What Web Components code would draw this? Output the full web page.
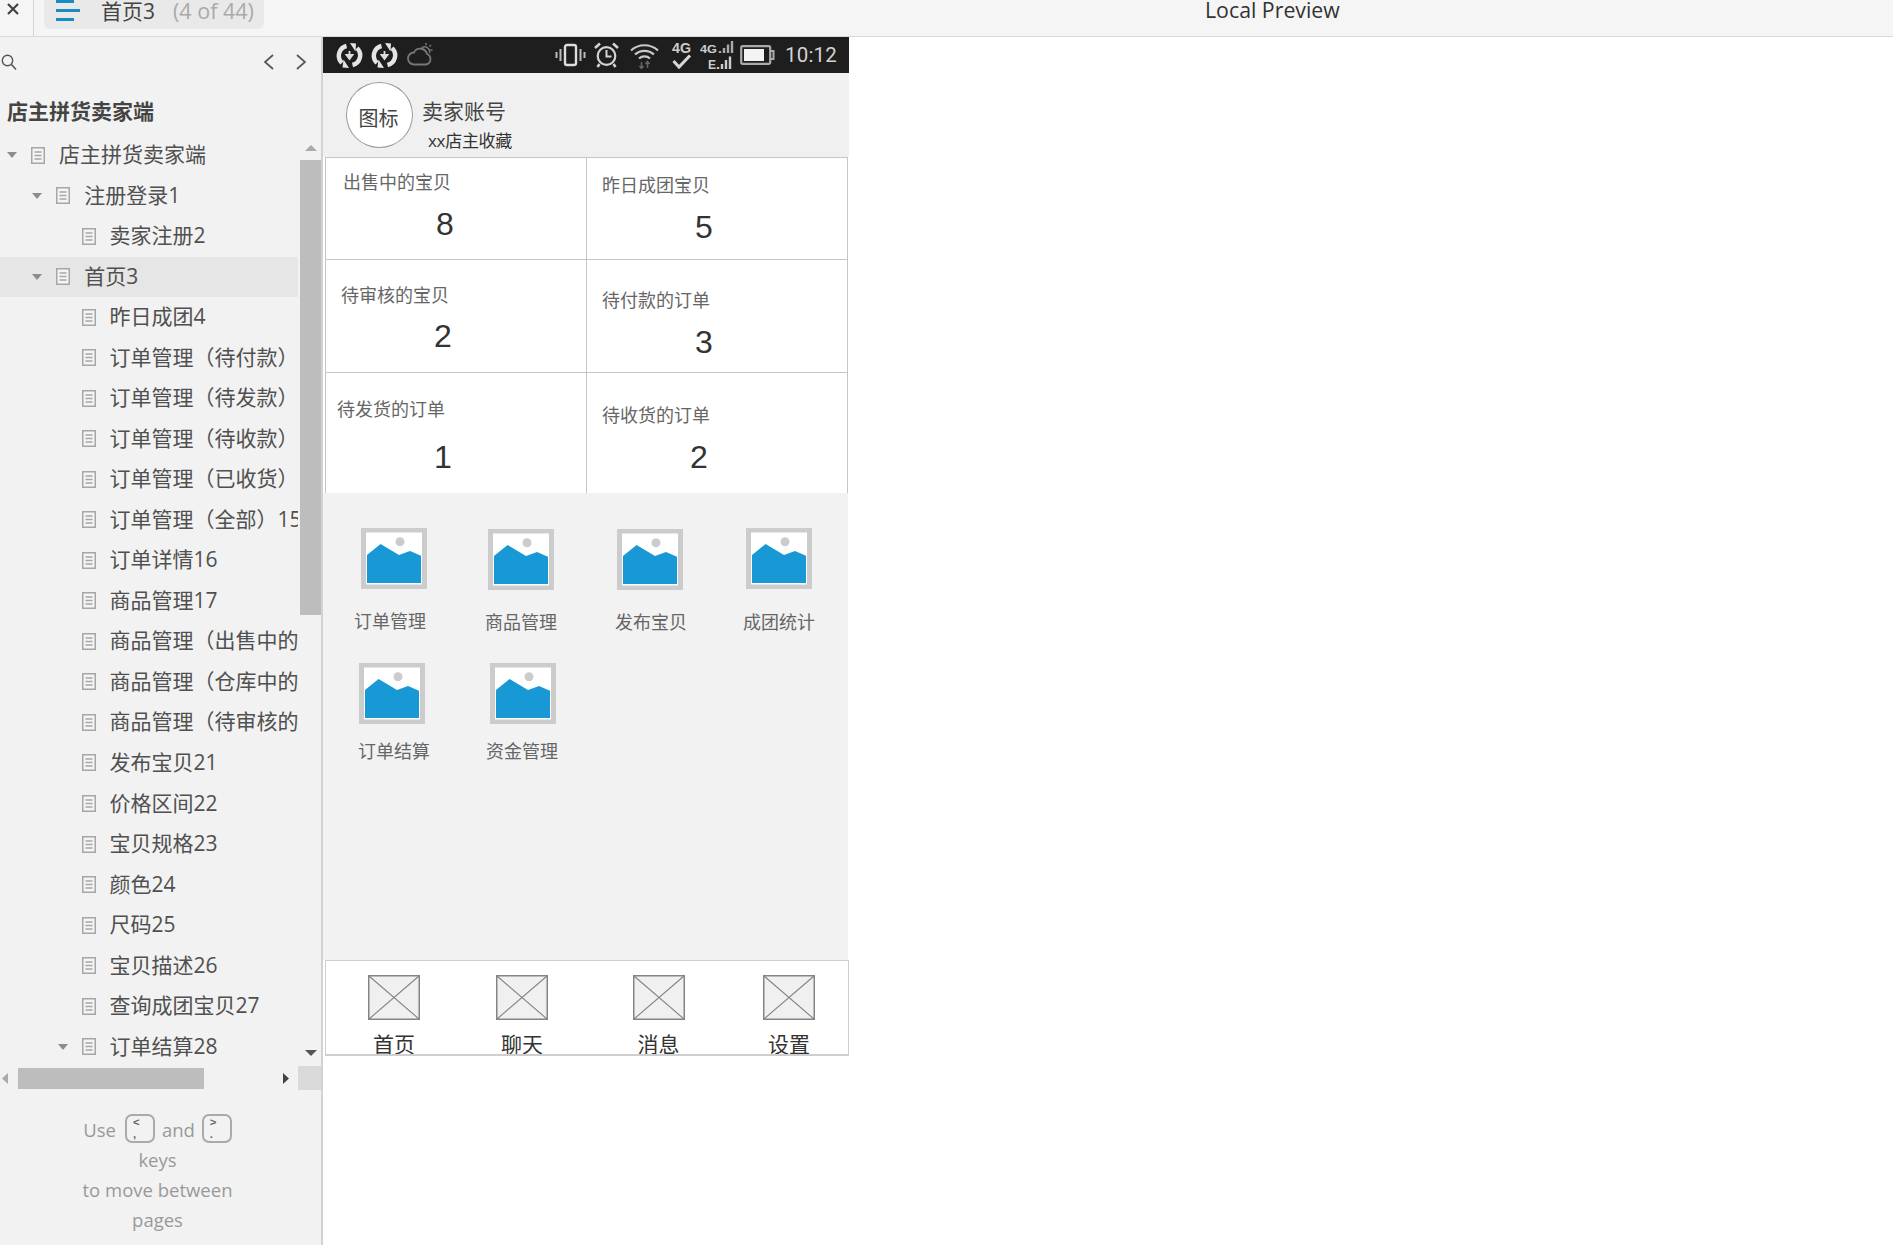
<!DOCTYPE html>
<html lang="zh-CN">
<head>
<meta charset="utf-8">
<title>Local Preview</title>
<style>
html, body { margin: 0; background: #fff; }
body { font-family: "Open Sans", "Noto Sans CJK SC", sans-serif; height: 1245px; overflow: hidden; }
</style>
</head>
<body>
<preview-app></preview-app>
<script>
const CN = `"Open Sans", "Noto Sans CJK SC", sans-serif`;

class TopBar extends HTMLElement {
	constructor () {
		super();
		this.attachShadow({ mode: 'open' });
		this.shadowRoot.innerHTML = `
		<style>
		:host { display: flex; height: 36px; background: #f5f5f5; border-bottom: 1px solid #d9d9d9; font-family: ${CN}; overflow: hidden; }
		.close { width: 33px; border-right: 1px solid #d5d5d5; flex: none; box-sizing: content-box; }
		.close svg { display: block; margin: 3px 0 0 7px; }
		.tab { margin-left: 10px; width: 220px; height: 29px; background: #e9e9e9; border-radius: 0 0 6px 6px; display: flex; align-items: center; flex: none; }
		.burger { margin-left: 12px; width: 24px; height: 21px; margin-top: -8px; flex: none; }
		.name { margin-left: 21px; font-size: 21px; line-height: 24px; color: #444; margin-top: -7px; }
		.count { margin-left: 18px; font-size: 21.5px; line-height: 24px; color: #aaa; margin-top: -7px; white-space: nowrap; }
		.title { margin-left: 941px; margin-top: -2px; font-size: 21.3px; line-height: 24px; color: #333; white-space: nowrap; }
		</style>
		<div class="close"><svg width="12" height="12" viewBox="0 0 12 12"><path d="M1 1 11 11M11 1 1 11" stroke="#444" stroke-width="2.2" fill="none"/></svg></div>
		<div class="tab">
			<svg class="burger" viewBox="0 0 24 21"><path d="M0 1.5H18M0 10.5H24M0 19.5H18" stroke="#1a8cc4" stroke-width="3" fill="none"/></svg>
			<span class="name">首页3</span><span class="count">(4 of 44)</span>
		</div>
		<div class="title">Local Preview</div>`;
	}
}
customElements.define('top-bar', TopBar);

class TreeRow extends HTMLElement {
	constructor () {
		super();
		this.attachShadow({ mode: 'open' });
	}
	connectedCallback() {
		const level = Number(this.getAttribute('level') || 0);
		const arrow = this.hasAttribute('arrow') ? 'visible' : 'hidden';
		this.shadowRoot.innerHTML = `
		<style>
		:host { display: flex; align-items: center; flex: 1 1 0; min-height: 0; white-space: nowrap; overflow: hidden; padding-left: ${7 + level * 25.3}px; font-size: 21px; color: #505050; font-family: ${CN}; }
		:host([selected]) { background: #e6e6e6; }
		.ar { visibility: ${arrow}; flex: none; width: 10px; height: 6px; margin-right: 14px; }
		.doc { flex: none; width: 14px; height: 17px; margin-right: 14px; }
		.t { margin-top: -4px; }
		</style>
		<svg class="ar" viewBox="0 0 10 6"><path d="M0 0H10L5 6Z" fill="#8c8c8c"/></svg>
		<svg class="doc" viewBox="0 0 14 17"><path d="M.75.75H13.25V16.25H.75Z" fill="#f4f4f4" stroke="#a6a6a6" stroke-width="1.5"/><path d="M3.5 5H10.5M3.5 8.5H10.5M3.5 12H10.5" stroke="#a6a6a6" stroke-width="1.3"/></svg>
		<span class="t"><slot></slot></span>`;
	}
}
customElements.define('tree-row', TreeRow);

class KeyCap extends HTMLElement {
	constructor () {
		super();
		this.attachShadow({ mode: 'open' });
		this.shadowRoot.innerHTML = `
		<style>
		:host { display: block; flex: none; width: 30px; height: 29px; box-sizing: border-box; border: 2px solid #aaa; border-radius: 7px; padding: 0 0 0 6px; color: #666; font: 700 11.3px/12.5px "Liberation Sans", sans-serif; text-align: left; overflow: hidden; }
		</style><slot></slot>`;
	}
}
customElements.define('key-cap', KeyCap);

class SideTree extends HTMLElement {
	constructor () {
		super();
		this.attachShadow({ mode: 'open' });
		const rows = [
			[0, 1, '店主拼货卖家端'], [1, 1, '注册登录1'], [2, 0, '卖家注册2'], [1, 1, '首页3', 1],
			[2, 0, '昨日成团4'], [2, 0, '订单管理（待付款）'], [2, 0, '订单管理（待发款）'], [2, 0, '订单管理（待收款）'],
			[2, 0, '订单管理（已收货）'], [2, 0, '订单管理（全部）15'], [2, 0, '订单详情16'], [2, 0, '商品管理17'],
			[2, 0, '商品管理（出售中的）18'], [2, 0, '商品管理（仓库中的）19'], [2, 0, '商品管理（待审核的）20'], [2, 0, '发布宝贝21'],
			[2, 0, '价格区间22'], [2, 0, '宝贝规格23'], [2, 0, '颜色24'], [2, 0, '尺码25'],
			[2, 0, '宝贝描述26'], [2, 0, '查询成团宝贝27'], [2, 1, '订单结算28'],
		].map(r => `<tree-row level="${r[0]}" ${r[1] ? 'arrow' : ''} ${r[3] ? 'selected' : ''}>${r[2]}</tree-row>`).join('');
		this.shadowRoot.innerHTML = `
		<style>
		:host { display: flex; flex-direction: column; width: 323px; box-sizing: border-box; height: 1208px; background: #f2f2f2; border-right: 2px solid #d2d2d2; flex: none; font-family: ${CN}; }
		.search { height: 50px; flex: none; display: flex; align-items: center; padding-left: 1px; }
		.search .nav { width: 11px; height: 18px; }
		.title { height: 48px; flex: none; box-sizing: border-box; padding: 12px 0 0 7px; font-size: 21px; line-height: 24px; font-weight: 700; color: #444; }
		.body { height: 932px; flex: none; display: flex; }
		.rows { width: 298px; display: flex; flex-direction: column; overflow: hidden; flex: none; }
		.vbar { flex: 1; padding-left: 2px; display: flex; flex-direction: column; }
		.up { height: 25px; display: flex; justify-content: center; padding-top: 10px; box-sizing: border-box; flex: none; }
		.thumb { height: 455px; background: #bdbdbd; flex: none; }
		.fill { flex: 1; }
		.down { height: 23px; box-sizing: border-box; display: flex; justify-content: center; padding-top: 6px; flex: none; }
		.hbar { height: 22px; flex: none; display: flex; align-items: center; }
		.hthumb { width: 186px; height: 21px; background: #bdbdbd; margin-left: 10px; flex: none; }
		.corner { width: 23px; height: 24px; background: #dadada; margin-left: auto; flex: none; }
		.hint { text-align: center; font-size: 18.5px; line-height: 30px; color: #999; padding: 26px 6px 0 0; }
		.first { display: flex; justify-content: center; align-items: center; gap: 7px; height: 30px; }
		.first key-cap { margin-top: -4px; }
		.first span:first-child { margin-right: 2px; }
		</style>
		<div class="search">
			<svg width="16" height="17" viewBox="0 0 16 17"><circle cx="6.5" cy="6.5" r="5.2" fill="none" stroke="#555" stroke-width="1.4"/><path d="M10.5 10.5 15 15.5" stroke="#555" stroke-width="1.6"/></svg>
			<svg class="nav" style="margin-left:246px" viewBox="0 0 11 18"><path d="M10 2 2 9 10 16" fill="none" stroke="#555" stroke-width="1.7"/></svg>
			<svg class="nav" style="margin-left:22px" viewBox="0 0 11 18"><path d="M1 2 9 9 1 16" fill="none" stroke="#555" stroke-width="1.7"/></svg>
		</div>
		<div class="title">店主拼货卖家端</div>
		<div class="body">
			<div class="rows">${rows}</div>
			<div class="vbar">
				<div class="up"><svg width="12" height="6" viewBox="0 0 12 6"><path d="M0 6H12L6 0Z" fill="#aaa"/></svg></div>
				<div class="thumb"></div><div class="fill"></div>
				<div class="down"><svg width="12" height="6" viewBox="0 0 12 6"><path d="M0 0H12L6 6Z" fill="#555"/></svg></div>
			</div>
		</div>
		<div class="hbar">
			<svg width="6" height="11" viewBox="0 0 6 11" style="margin-left:2px;flex:none"><path d="M6 0V11L0 5.5Z" fill="#aaa"/></svg>
			<div class="hthumb"></div>
			<svg width="6" height="11" viewBox="0 0 6 11" style="margin-left:79px;flex:none"><path d="M0 0V11L6 5.5Z" fill="#444"/></svg>
			<div class="corner"></div>
		</div>
		<div class="hint">
			<div class="first"><span>Use</span><key-cap>&lt;<br>,</key-cap><span>and</span><key-cap>&gt;<br>.</key-cap></div>
			<div>keys</div><div>to move between</div><div>pages</div>
		</div>`;
	}
}
customElements.define('side-tree', SideTree);

class StatusBar extends HTMLElement {
	constructor () {
		super();
		this.attachShadow({ mode: 'open' });
		const sync = `<svg width="27" height="25" viewBox="0 0 27 25" style="margin-left:MLpx">
			<path d="M10.5 3A10 10 0 0 0 6 20" fill="none" stroke="#e4e4e4" stroke-width="4.4"/>
			<path d="M16.5 22A10 10 0 0 0 21 5" fill="none" stroke="#e4e4e4" stroke-width="4.4"/>
			<path d="M14 0 20 .5 19.5 8.5ZM13 25 6.5 24.5 7.5 16.5Z" fill="#e4e4e4"/>
			<path d="M13.5 8V13M10.5 12 13.5 16 16.5 12Z" fill="#ddd" stroke="#ddd" stroke-width="1.8"/></svg>`;
		this.shadowRoot.innerHTML = `
		<style>
		:host { display: flex; align-items: center; height: 36px; background: #1e1e1e; flex: none; overflow: hidden; }
		svg { flex: none; display: block; }
		.time { margin-left: 10px; font: 20.5px/24px Roboto, "Liberation Sans", sans-serif; color: #d2d2d2; letter-spacing: .2px; }
		text { font-family: "Liberation Sans", sans-serif; font-weight: 700; fill: #ccc; }
		</style>
		${sync.replace('ML', '13')}${sync.replace('ML', '8')}
		<svg width="26" height="24" viewBox="0 0 26 24" style="margin-left:9px"><path d="M7 21.5H19A5.5 5.5 0 0 0 20 11 7 7 0 0 0 7 9.5 6 6 0 0 0 7 21.5Z" fill="#1e1e1e" stroke="#777" stroke-width="1.8"/><path d="M14.5 5A5 5 0 0 1 22.5 10M19 0V2.2M25.5 7H23.5M24 2 22.5 3.5" fill="none" stroke="#777" stroke-width="1.5"/></svg>
		<svg width="31" height="24" viewBox="0 0 31 24" style="margin-left:122px"><path d="M1.5 9V15M5.5 6V18M25.5 6V18M29.5 9V15" stroke="#bbb" stroke-width="2" fill="none"/><rect x="10" y="2" width="11" height="20" rx="2" fill="none" stroke="#ddd" stroke-width="2.4"/></svg>
		<svg width="25" height="26" viewBox="0 0 25 26" style="margin-left:8px"><circle cx="12.5" cy="14" r="8.8" fill="none" stroke="#d4d4d4" stroke-width="2.2"/><path d="M12.5 8V14.5H17.5" fill="none" stroke="#d4d4d4" stroke-width="2"/><path d="M1 6 6 1.5M24 6 19 1.5M5.5 22 3.5 25M19.5 22 21.5 25" stroke="#d4d4d4" stroke-width="2.6"/></svg>
		<svg width="29" height="27" viewBox="0 0 29 27" style="margin-left:11px"><path d="M1 8.5A20 20 0 0 1 28 8.5M5 12.5A14 14 0 0 1 24 12.5M9 16.5A8 8 0 0 1 20 16.5" fill="none" stroke="#c8c8c8" stroke-width="2.2"/><path d="M11.5 20V26M9.5 24 11.5 26.5 13.5 24M17.5 26V20M15.5 22 17.5 19.5 19.5 22" fill="none" stroke="#666" stroke-width="1.5"/></svg>
		<svg width="20" height="30" viewBox="0 0 20 30" style="margin-left:13px"><text x="0" y="12.5" font-size="15" textLength="19" lengthAdjust="spacingAndGlyphs">4G</text><path d="M1.5 21 7 27 18 15.5" fill="none" stroke="#d8d8d8" stroke-width="3"/></svg>
		<svg width="34" height="31" viewBox="0 0 34 31" style="margin-left:8px"><text x="0" y="13" font-size="11" textLength="17" lengthAdjust="spacingAndGlyphs">4G</text><path d="M20 13V11M24 13V8M28 13V4.5M32 13V1" stroke="#aaa" stroke-width="2.4"/><text x="8" y="29" font-size="12">E</text><path d="M18 29V27M22 29V24M26 29V20M30 29V16.5" stroke="#ccc" stroke-width="2.4"/></svg>
		<svg width="35" height="20" viewBox="0 0 35 20" style="margin-left:6px"><rect x="1.2" y="1.2" width="29" height="17.6" rx="1.5" fill="none" stroke="#aaa" stroke-width="2.2"/><rect x="4" y="4" width="20" height="12" fill="#f4f4f4"/><path d="M31 6H33.5V14H31" fill="none" stroke="#aaa" stroke-width="2"/></svg>
		<span class="time">10:12</span>`;
	}
}
customElements.define('status-bar', StatusBar);

class ShopHeader extends HTMLElement {
	constructor () {
		super();
		this.attachShadow({ mode: 'open' });
		this.shadowRoot.innerHTML = `
		<style>
		:host { display: flex; height: 84px; background: #f0f0f0; flex: none; box-sizing: border-box; font-family: ${CN}; color: #444; }
		.avatar { margin: 9px 0 0 23px; width: 67px; height: 66px; box-sizing: border-box; border: 1px solid #999; border-radius: 50%; background: #fff; display: flex; align-items: center; justify-content: center; padding: 5px 2px 0 0; font-size: 20px; flex: none; }
		.txt { margin-left: 9px; }
		.acc { margin-top: 26px; font-size: 21px; line-height: 24px; white-space: nowrap; }
		.fav { margin: 6px 0 0 6px; font-size: 17px; line-height: 24px; white-space: nowrap; letter-spacing: -.3px; color: #333; }
		</style>
		<div class="avatar">图标</div>
		<div class="txt"><div class="acc"><slot name="acc"></slot></div><div class="fav"><slot name="fav"></slot></div></div>`;
	}
}
customElements.define('shop-header', ShopHeader);

class StatCell extends HTMLElement {
	constructor () {
		super();
		this.attachShadow({ mode: 'open' });
	}
	connectedCallback() {
		const m = this.getAttribute('m').split(' ');
		this.shadowRoot.innerHTML = `
		<style>
		:host { display: block; box-sizing: border-box; border-right: 1px solid #c6c6c6; font-family: ${CN}; overflow: hidden; }
		.l { margin: ${m[0]}px 0 0 ${m[1]}px; font-size: 18px; line-height: 24px; color: #666; white-space: nowrap; }
		.n { margin: ${m[2]}px 0 0 ${m[3]}px; font: 32px/36px "Liberation Sans", sans-serif; color: #333; }
		</style>
		<div class="l">${this.getAttribute('label')}</div>
		<div class="n">${this.getAttribute('value')}</div>`;
	}
}
customElements.define('stat-cell', StatCell);

class StatGrid extends HTMLElement {
	constructor () {
		super();
		this.attachShadow({ mode: 'open' });
		this.shadowRoot.innerHTML = `
		<style>
		:host { display: grid; grid-template-columns: 261px 261px; grid-template-rows: 102px 113px 120px; margin-left: 2px; width: 523px; height: 336px; box-sizing: border-box; border-left: 1px solid #c6c6c6; border-top: 1px solid #c6c6c6; background: #fff; flex: none; }
		::slotted(stat-cell:nth-child(-n+4)) { border-bottom: 1px solid #c6c6c6; }
		</style>
		<slot></slot>`;
	}
}
customElements.define('stat-grid', StatGrid);

class AppIcon extends HTMLElement {
	constructor () {
		super();
		this.attachShadow({ mode: 'open' });
	}
	connectedCallback() {
		const m = this.getAttribute('m').split(' ');
		this.shadowRoot.innerHTML = `
		<style>
		:host { display: block; width: 80px; flex: none; margin-left: ${m[0]}px; font-family: ${CN}; }
		svg { display: block; margin: ${m[1]}px 0 0 ${m[2]}px; }
		.l { margin-top: ${m[3] || 20}px; font-size: 18px; line-height: 24px; color: #666; white-space: nowrap; }
		</style>
		<svg width="66" height="61" viewBox="0 0 66 61">
			<rect width="66" height="61" fill="#ccc"/><rect x="5" y="4.5" width="56" height="52" fill="#fff"/>
			<path d="M6 27 19.6 16 38 27 49 23 60 27.7V55H6Z" fill="#1899d6"/>
			<circle cx="39" cy="13.7" r="4.5" fill="#ccc"/>
		</svg>
		<div class="l"><slot></slot></div>`;
	}
}
customElements.define('app-icon', AppIcon);

class TabItem extends HTMLElement {
	constructor () {
		super();
		this.attachShadow({ mode: 'open' });
	}
	connectedCallback() {
		this.shadowRoot.innerHTML = `
		<style>
		:host { display: flex; flex-direction: column; align-items: center; width: 52px; flex: none; margin-left: ${this.getAttribute('ml')}px; font-family: ${CN}; }
		svg { display: block; flex: none; }
		.l { margin-top: 11px; font-size: 21px; line-height: 26px; color: #333; white-space: nowrap; }
		</style>
		<svg width="52" height="45" viewBox="0 0 52 45"><rect x=".75" y=".75" width="50.5" height="43.5" fill="#f0f0f0" stroke="#848484" stroke-width="1.5"/><path d="M1 1 51 44M51 1 1 44" stroke="#848484" stroke-width="1.1"/></svg>
		<div class="l"><slot></slot></div>`;
	}
}
customElements.define('tab-item', TabItem);

class PhoneFrame extends HTMLElement {
	constructor () {
		super();
		this.attachShadow({ mode: 'open' });
		this.shadowRoot.innerHTML = `
		<style>
		:host { display: flex; flex-direction: column; width: 526px; flex: none; height: 1018px; }
		.apps { height: 467px; background: #f2f2f2; box-sizing: border-box; padding-top: 35px; flex: none; margin-right: 1px; }
		.row { display: flex; height: 135px; }
		.tabs { margin-left: 2px; height: 96px; box-sizing: border-box; border: 1px solid #cfcfcf; border-bottom-width: 2px; background: #fff; display: flex; padding-top: 14px; overflow: hidden; flex: none; }
		</style>
		<status-bar></status-bar>
		<shop-header><span slot="acc">卖家账号</span><span slot="fav">xx店主收藏</span></shop-header>
		<stat-grid>
			<stat-cell label="出售中的宝贝" value="8" m="12 17 12 110"></stat-cell>
			<stat-cell label="昨日成团宝贝" value="5" m="15 15 12 108"></stat-cell>
			<stat-cell label="待审核的宝贝" value="2" m="23 15 11 108"></stat-cell>
			<stat-cell label="待付款的订单" value="3" m="28 15 12 108"></stat-cell>
			<stat-cell label="待发货的订单" value="1" m="24 11 18 108"></stat-cell>
			<stat-cell label="待收货的订单" value="2" m="30 15 12 103"></stat-cell>
		</stat-grid>
		<div class="apps">
			<div class="row">
				<app-icon m="31 0 7">订单管理</app-icon>
				<app-icon m="51 1 3">商品管理</app-icon>
				<app-icon m="50 1 2">发布宝贝</app-icon>
				<app-icon m="48 0 3 21">成团统计</app-icon>
			</div>
			<div class="row">
				<app-icon m="35 0 1 15">订单结算</app-icon>
				<app-icon m="48 0 4 15">资金管理</app-icon>
			</div>
		</div>
		<div class="tabs">
			<tab-item ml="42">首页</tab-item>
			<tab-item ml="76">聊天</tab-item>
			<tab-item ml="84.5">消息</tab-item>
			<tab-item ml="78.5">设置</tab-item>
		</div>`;
	}
}
customElements.define('phone-frame', PhoneFrame);

class PreviewApp extends HTMLElement {
	constructor () {
		super();
		this.attachShadow({ mode: 'open' });
		this.shadowRoot.innerHTML = `
		<style>
		:host { display: block; }
		.main { display: flex; }
		</style>
		<top-bar></top-bar>
		<div class="main"><side-tree></side-tree><phone-frame></phone-frame></div>`;
	}
}
customElements.define('preview-app', PreviewApp);
</script>
</body>
</html>
